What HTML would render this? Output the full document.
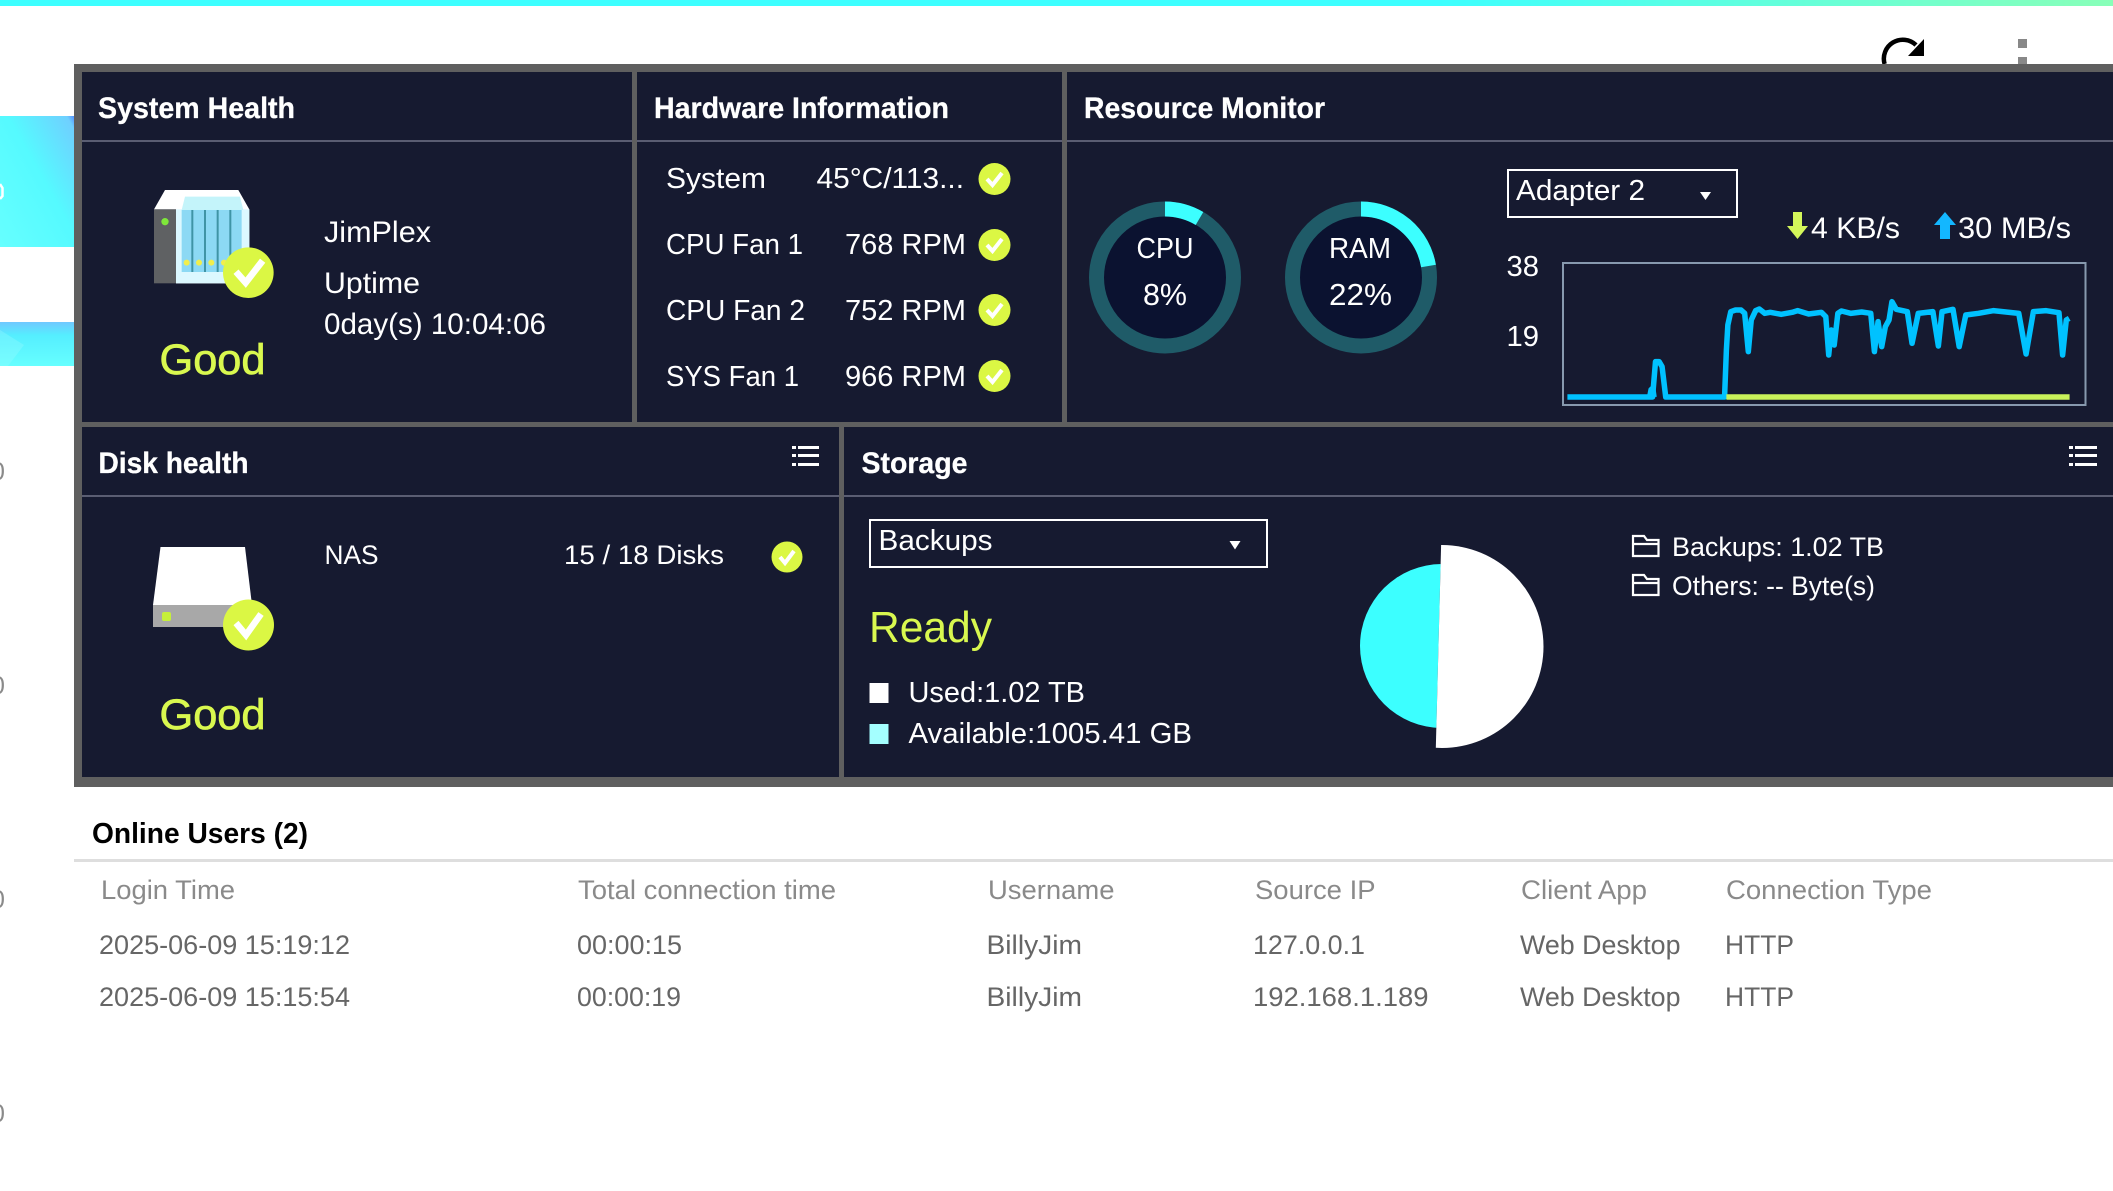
<!DOCTYPE html>
<html lang="en">
<head>
<meta charset="utf-8">
<title>System Status</title>
<style>
html,body{margin:0;padding:0;width:2113px;height:1191px;overflow:hidden;background:#fff}
svg{display:block}
text{font-family:"Liberation Sans",Arial,sans-serif;fill:#fff;font-size:28.5px}
.h{font-weight:700;font-size:29.5px;stroke:#fff;stroke-width:.3px}
.g{fill:#d9f84f;font-size:43px;stroke:#d9f84f;stroke-width:.7px}
.r{fill:#d9f84f;font-size:44px}
.th{fill:#8a8a8a;font-size:27px}
.td{fill:#666;font-size:27px}
.c{font-size:31px}
.j{font-size:30px}
.n{font-size:27px}
.s{font-size:30px}
.l{font-size:26.5px}
</style>
</head>
<body>
<svg xmlns="http://www.w3.org/2000/svg" width="2113" height="1191" viewBox="0 0 2113 1191">
<defs>
<linearGradient id="top" x1="0" x2="1" y1="0" y2="0">
<stop offset="0" stop-color="#3cffff"/><stop offset=".68" stop-color="#3cffff"/><stop offset="1" stop-color="#88ffb8"/>
</linearGradient>
<linearGradient id="b1" x1="0" x2="1" y1="1" y2="0">
<stop offset="0" stop-color="#66ffff"/><stop offset=".55" stop-color="#55faff"/><stop offset=".95" stop-color="#6fd0ff"/><stop offset="1" stop-color="#5590ff"/>
</linearGradient>
<linearGradient id="b2" x1="0" x2="0" y1="0" y2="1">
<stop offset="0" stop-color="#70c8ff"/><stop offset=".3" stop-color="#55eeff"/><stop offset="1" stop-color="#66ffff"/>
</linearGradient>
<filter id="soft" x="-5%" y="-5%" width="110%" height="110%"><feGaussianBlur stdDeviation=".6"/></filter>
<clipPath id="pl"><path d="M1340 530 H1441.500 L1435.500 760 H1340Z"/></clipPath>
<clipPath id="pr"><path d="M1441.500 530 H1560 V760 H1435.500Z"/></clipPath>
</defs>

<rect width="2113" height="1191" fill="#fff"/>
<rect width="2113" height="6" fill="url(#top)"/>

<!-- left edge background -->
<rect x="0" y="116" width="74" height="131" fill="url(#b1)"/>
<path d="M0 184 L2.500 188 L2.500 196 L0 199" fill="none" stroke="#fff" stroke-width="2.500"/>
<rect x="0" y="322" width="74" height="44" fill="url(#b2)"/>
<path d="M0 330 L24 345 L8 366 L0 366Z" fill="#9ffcff" opacity=".3"/>
<text class="th" x="-9" y="480" style="font-size:25px">0</text>
<text class="th" x="-9" y="694" style="font-size:25px">0</text>
<text class="th" x="-9" y="908" style="font-size:25px">0</text>
<text class="th" x="-9" y="1122" style="font-size:25px">0</text>

<!-- toolbar icons -->
<path d="M1884.600 64 A19 19 0 0 1 1916 45" fill="none" stroke="#000" stroke-width="4.500"/>
<path d="M1924 39 V56 H1908Z" fill="#000"/>
<rect x="2018" y="39" width="9" height="9" fill="#888"/>
<rect x="2018" y="57" width="9" height="8" fill="#888"/>

<!-- panel -->
<rect x="74" y="64" width="2039" height="723" fill="#5f5f5f"/>
<rect x="82" y="72" width="550" height="350" fill="#161a30"/>
<rect x="637" y="72" width="425" height="350" fill="#161a30"/>
<rect x="1067" y="72" width="1046" height="350" fill="#161a30"/>
<rect x="82" y="427" width="757" height="350" fill="#161a30"/>
<rect x="844" y="427" width="1269" height="350" fill="#161a30"/>
<g fill="#5a5d72">
<rect x="82" y="140" width="550" height="2"/>
<rect x="637" y="140" width="425" height="2"/>
<rect x="1067" y="140" width="1046" height="2"/>
<rect x="82" y="495" width="757" height="2"/>
<rect x="844" y="495" width="1269" height="2"/>
</g>

<!-- headers -->
<text class="h" x="98" y="118" textLength="197" lengthAdjust="spacingAndGlyphs">System Health</text>
<text class="h" x="654" y="118" textLength="295" lengthAdjust="spacingAndGlyphs">Hardware Information</text>
<text class="h" x="1084" y="118" textLength="241" lengthAdjust="spacingAndGlyphs">Resource Monitor</text>
<text class="h" x="98.500" y="473" textLength="150" lengthAdjust="spacingAndGlyphs">Disk health</text>
<text class="h" x="861.500" y="473" textLength="106" lengthAdjust="spacingAndGlyphs">Storage</text>

<!-- System health -->
<g transform="translate(130,170) scale(.3333)">
<path d="M105 60 H325 L358 118 V340 H138 V118 H72Z" fill="#fff"/>
<rect x="72" y="118" width="66" height="222" fill="#5f6163"/>
<rect x="138" y="118" width="220" height="222" fill="#dcf8ff"/>
<path d="M165 80 H330 L340 120 H155Z" fill="#c4f4fa"/>
<rect x="155" y="120" width="180" height="186" fill="#8cd9f4"/>
<g fill="#3f94a6"><rect x="184" y="120" width="6" height="186"/><rect x="222" y="120" width="6" height="186"/><rect x="260" y="120" width="6" height="186"/><rect x="298" y="120" width="6" height="186"/></g>
<g fill="#f1ee4c"><circle cx="170" cy="278" r="9"/><circle cx="207" cy="278" r="9"/><circle cx="244" cy="278" r="9"/><circle cx="282" cy="278" r="9"/></g>
<circle cx="105" cy="155" r="11" fill="#7fe83a"/>
<circle cx="355" cy="308" r="76" fill="#dbf744"/>
<path d="M318 305 L347 338 L398 272" fill="none" stroke="#fff" stroke-width="20"/>
</g>
<text class="g" x="159.500" y="374" textLength="106" lengthAdjust="spacingAndGlyphs">Good</text>
<text class="j" x="324" y="242" textLength="107" lengthAdjust="spacingAndGlyphs">JimPlex</text>
<text class="j" x="324" y="293" textLength="96" lengthAdjust="spacingAndGlyphs">Uptime</text>
<text class="j" x="324" y="334" textLength="222" lengthAdjust="spacingAndGlyphs">0day(s) 10:04:06</text>

<!-- Hardware information -->
<text x="666" y="188" textLength="100" lengthAdjust="spacingAndGlyphs">System</text>
<text x="816.500" y="188" textLength="147.500" lengthAdjust="spacingAndGlyphs">45°C/113...</text>
<text x="666" y="254" textLength="137" lengthAdjust="spacingAndGlyphs">CPU Fan 1</text>
<text x="845" y="254" textLength="121" lengthAdjust="spacingAndGlyphs">768 RPM</text>
<text x="666" y="320" textLength="139" lengthAdjust="spacingAndGlyphs">CPU Fan 2</text>
<text x="845" y="320" textLength="121" lengthAdjust="spacingAndGlyphs">752 RPM</text>
<text x="666" y="386" textLength="133" lengthAdjust="spacingAndGlyphs">SYS Fan 1</text>
<text x="845" y="386" textLength="121" lengthAdjust="spacingAndGlyphs">966 RPM</text>
<g fill="#dbf744">
<circle cx="994.500" cy="179" r="16"/><circle cx="994.500" cy="245" r="16"/><circle cx="994.500" cy="310" r="16"/><circle cx="994.500" cy="376" r="16"/>
</g>
<g fill="none" stroke="#fff" stroke-width="4">
<path d="M987 179 L992.500 185 L1002 173"/><path d="M987 245 L992.500 251 L1002 239"/><path d="M987 310 L992.500 316 L1002 304"/><path d="M987 376 L992.500 382 L1002 370"/>
</g>

<!-- Resource monitor rings -->
<circle cx="1165" cy="277.500" r="61" fill="#0b1230"/>
<circle cx="1165" cy="277.500" r="68.500" fill="none" stroke="#1f5b68" stroke-width="15"/>
<path d="M1165 209 A68.500 68.500 0 0 1 1199.500 218.500" fill="none" stroke="#3cffff" stroke-width="15"/>
<circle cx="1361" cy="277.500" r="61" fill="#0b1230"/>
<circle cx="1361" cy="277.500" r="68.500" fill="none" stroke="#1f5b68" stroke-width="15"/>
<path d="M1361 209 A68.500 68.500 0 0 1 1428.500 266" fill="none" stroke="#3cffff" stroke-width="15"/>
<text x="1136.500" y="258" textLength="57" lengthAdjust="spacingAndGlyphs">CPU</text>
<text class="c" x="1143" y="305" textLength="44" lengthAdjust="spacingAndGlyphs">8%</text>
<text x="1329" y="258" textLength="62" lengthAdjust="spacingAndGlyphs">RAM</text>
<text class="c" x="1329" y="305" textLength="63" lengthAdjust="spacingAndGlyphs">22%</text>

<!-- Adapter select -->
<rect x="1508" y="170" width="229" height="47" fill="none" stroke="#fff" stroke-width="2"/>
<text x="1516" y="200" textLength="129" lengthAdjust="spacingAndGlyphs">Adapter 2</text>
<path d="M1700 192 H1711 L1705.500 200Z" fill="#fff"/>

<!-- Speeds -->
<path d="M1793 212 H1802 V226 H1808 L1797.500 239 L1787 226 H1793Z" fill="#d3f65a"/>
<text class="s" x="1811" y="238" textLength="89" lengthAdjust="spacingAndGlyphs">4 KB/s</text>
<path d="M1945 212 L1956 225 H1950 V239 H1940 V225 H1934Z" fill="#13b7ff"/>
<text class="s" x="1958" y="238" textLength="113" lengthAdjust="spacingAndGlyphs">30 MB/s</text>
<text x="1506.500" y="276" textLength="32.500" lengthAdjust="spacingAndGlyphs">38</text>
<text x="1506.500" y="346" textLength="32.500" lengthAdjust="spacingAndGlyphs">19</text>

<!-- Chart -->
<rect x="1563" y="263" width="522.500" height="142" fill="none" stroke="#8799ae" stroke-width="2"/>
<g transform="translate(1540,250) scale(.36547,.33333)" filter="url(#soft)">
<polyline vector-effect="non-scaling-stroke" fill="none" stroke="#00c2ff" stroke-width="4" stroke-linejoin="round" points="298,441 302,418 310,410 314,441"/>
<polyline vector-effect="non-scaling-stroke" fill="none" stroke="#00c2ff" stroke-width="5.500" stroke-linejoin="round" points="75,441 308,441 316,335 326,335 334,350 344,441 505,441 510,300 514,225 522,185 535,180 550,180 560,190 570,305 578,210 590,182 600,177 615,190 630,187 660,193 690,187 705,182 735,192 770,187 782,200 790,315 797,240 805,285 815,190 825,183 850,190 880,186 905,190 915,305 925,215 935,290 945,230 955,210 963,155 975,178 1005,185 1018,280 1035,190 1075,185 1090,288 1100,185 1130,178 1147,290 1165,195 1200,190 1240,182 1310,190 1330,312 1350,185 1385,182 1420,188 1430,315 1440,210 1448,205"/>
<polyline vector-effect="non-scaling-stroke" fill="none" stroke="#c9f25a" stroke-width="5.500" points="510,441 1449,441"/>
</g>

<!-- Disk health -->
<g fill="#fff">
<rect x="792" y="446" width="4" height="3"/><rect x="798" y="446" width="21" height="3"/>
<rect x="792" y="454" width="4" height="3"/><rect x="798" y="454" width="21" height="3"/>
<rect x="792" y="463" width="4" height="3"/><rect x="798" y="463" width="21" height="3"/>
<rect x="2069" y="446" width="4" height="3"/><rect x="2075" y="446" width="22" height="3"/>
<rect x="2069" y="454" width="4" height="3"/><rect x="2075" y="454" width="22" height="3"/>
<rect x="2069" y="463" width="4" height="3"/><rect x="2075" y="463" width="22" height="3"/>
</g>
<path d="M160.500 547 H245 L252 605 H153Z" fill="#fff"/>
<rect x="153" y="605" width="99" height="22" fill="#a8a8a8"/>
<rect x="162" y="612" width="9" height="9" rx="2" fill="#c6f03a"/>
<circle cx="248.500" cy="625" r="25.500" fill="#dbf744"/>
<path d="M236 623 L246 635 L261 614" fill="none" stroke="#fff" stroke-width="6.500"/>
<text class="g" x="159.500" y="729" textLength="106" lengthAdjust="spacingAndGlyphs">Good</text>
<text class="n" x="324.500" y="564" textLength="54" lengthAdjust="spacingAndGlyphs">NAS</text>
<text class="n" x="564" y="564" textLength="160" lengthAdjust="spacingAndGlyphs">15 / 18 Disks</text>
<circle cx="787" cy="557" r="15.500" fill="#dbf744"/>
<path d="M780 557 L785 563 L794 551" fill="none" stroke="#fff" stroke-width="4"/>

<!-- Storage -->
<rect x="870" y="520" width="397" height="47" fill="none" stroke="#fff" stroke-width="2"/>
<text x="878.500" y="550" textLength="114" lengthAdjust="spacingAndGlyphs">Backups</text>
<path d="M1229.500 541 H1240.500 L1235 549.500Z" fill="#fff"/>
<text class="r" x="869" y="642" textLength="123" lengthAdjust="spacingAndGlyphs">Ready</text>
<rect x="869.500" y="683" width="19" height="20" fill="#fff"/>
<text x="908.500" y="702" textLength="176.500" lengthAdjust="spacingAndGlyphs">Used:1.02 TB</text>
<rect x="869.500" y="724" width="19" height="20" fill="#a4ffff"/>
<text x="908.500" y="743" textLength="283.500" lengthAdjust="spacingAndGlyphs">Available:1005.41 GB</text>

<!-- Pie -->
<circle cx="1442" cy="646" r="82" fill="#3cffff" clip-path="url(#pl)"/>
<circle cx="1442" cy="646.500" r="101.500" fill="#fff" clip-path="url(#pr)"/>

<!-- Legend -->
<g fill="none" stroke="#fff" stroke-width="2.200">
<path d="M1633 556 V536 H1644 L1647 540 H1658.500 V556Z"/><path d="M1633 544 H1658.500"/>
<path d="M1633 595 V575 H1644 L1647 579 H1658.500 V595Z"/><path d="M1633 583 H1658.500"/>
</g>
<text class="l" x="1672" y="556" textLength="212" lengthAdjust="spacingAndGlyphs">Backups: 1.02 TB</text>
<text class="l" x="1672" y="595" textLength="203" lengthAdjust="spacingAndGlyphs">Others: -- Byte(s)</text>

<!-- Online users -->
<text style="fill:#000;font-weight:700;font-size:28.500px" x="92" y="843" textLength="216" lengthAdjust="spacingAndGlyphs">Online Users (2)</text>
<rect x="74" y="859" width="2039" height="3" fill="#dedede"/>
<text class="th" x="101" y="899" textLength="134" lengthAdjust="spacingAndGlyphs">Login Time</text>
<text class="th" x="578" y="899" textLength="258" lengthAdjust="spacingAndGlyphs">Total connection time</text>
<text class="th" x="988" y="899" textLength="126.500" lengthAdjust="spacingAndGlyphs">Username</text>
<text class="th" x="1255" y="899" textLength="120.500" lengthAdjust="spacingAndGlyphs">Source IP</text>
<text class="th" x="1521" y="899" textLength="126" lengthAdjust="spacingAndGlyphs">Client App</text>
<text class="th" x="1726" y="899" textLength="206" lengthAdjust="spacingAndGlyphs">Connection Type</text>

<text class="td" x="99" y="954" textLength="251" lengthAdjust="spacingAndGlyphs">2025-06-09 15:19:12</text>
<text class="td" x="577" y="954" textLength="105" lengthAdjust="spacingAndGlyphs">00:00:15</text>
<text class="td" x="986.500" y="954" textLength="95.500" lengthAdjust="spacingAndGlyphs">BillyJim</text>
<text class="td" x="1253" y="954" textLength="112" lengthAdjust="spacingAndGlyphs">127.0.0.1</text>
<text class="td" x="1520" y="954" textLength="160.500" lengthAdjust="spacingAndGlyphs">Web Desktop</text>
<text class="td" x="1725" y="954" textLength="69" lengthAdjust="spacingAndGlyphs">HTTP</text>

<text class="td" x="99" y="1006" textLength="251" lengthAdjust="spacingAndGlyphs">2025-06-09 15:15:54</text>
<text class="td" x="577" y="1006" textLength="104" lengthAdjust="spacingAndGlyphs">00:00:19</text>
<text class="td" x="986.500" y="1006" textLength="95.500" lengthAdjust="spacingAndGlyphs">BillyJim</text>
<text class="td" x="1253" y="1006" textLength="175.500" lengthAdjust="spacingAndGlyphs">192.168.1.189</text>
<text class="td" x="1520" y="1006" textLength="160.500" lengthAdjust="spacingAndGlyphs">Web Desktop</text>
<text class="td" x="1725" y="1006" textLength="69" lengthAdjust="spacingAndGlyphs">HTTP</text>
</svg>
</body>
</html>
